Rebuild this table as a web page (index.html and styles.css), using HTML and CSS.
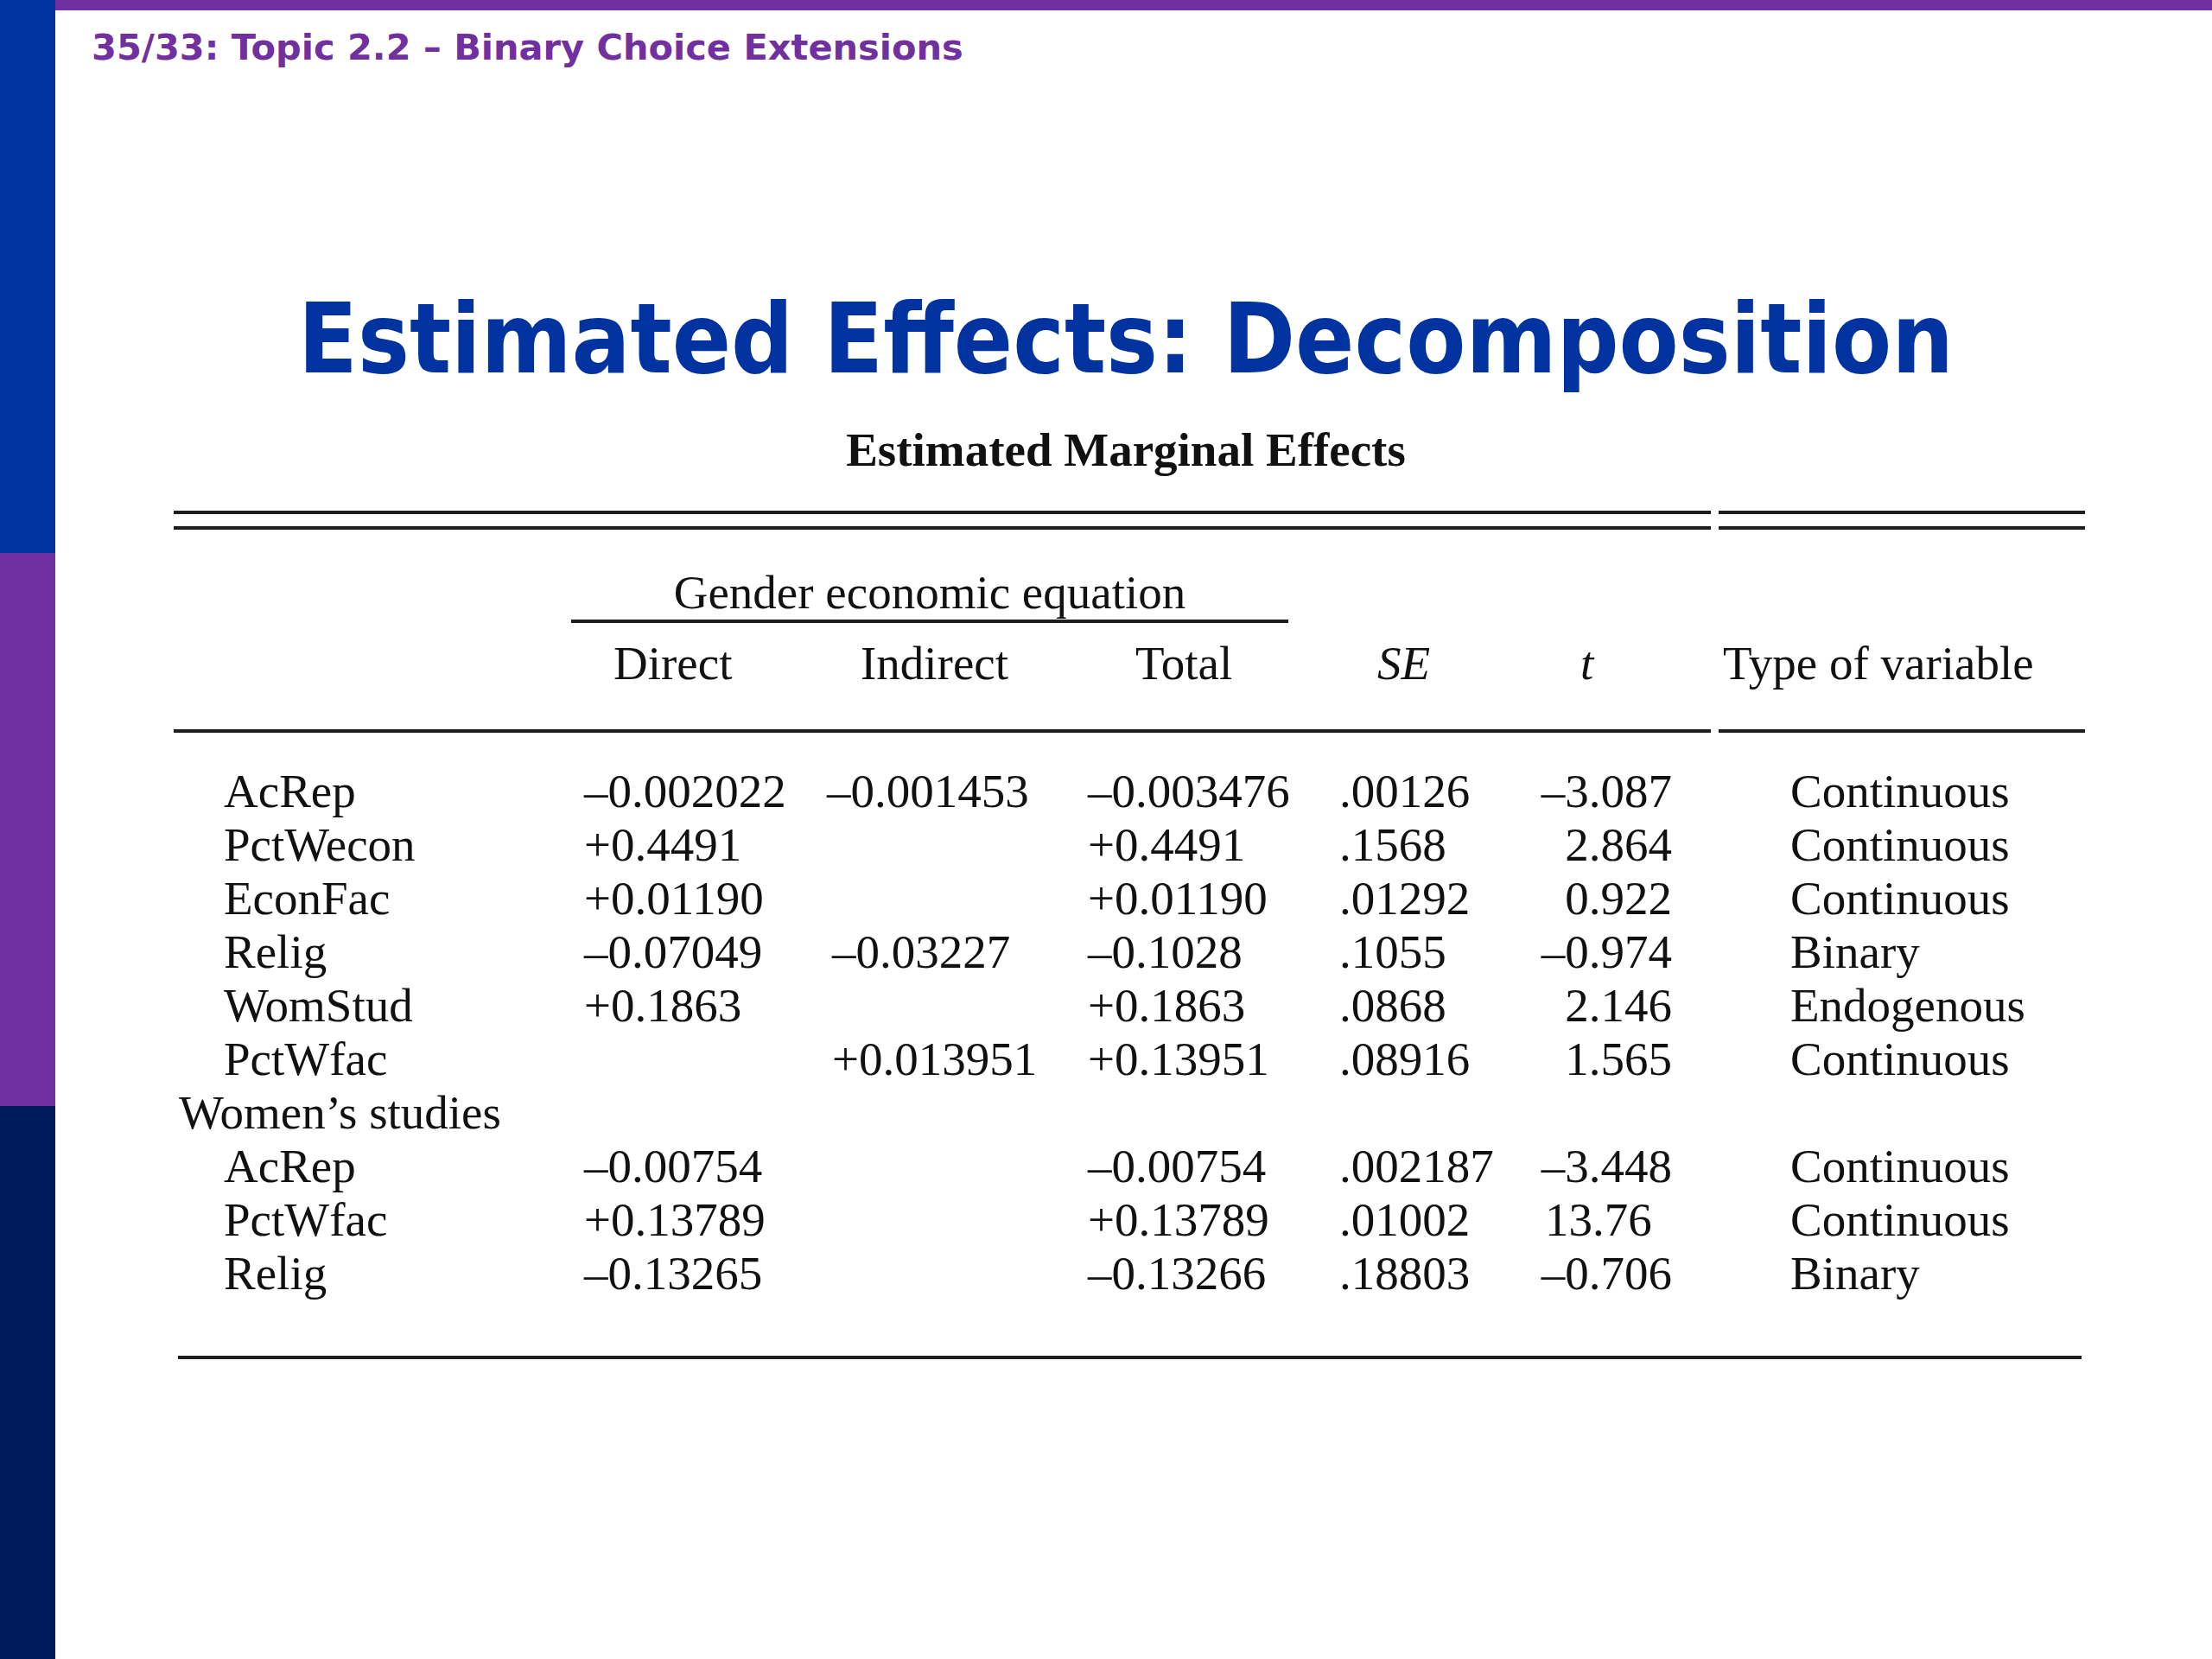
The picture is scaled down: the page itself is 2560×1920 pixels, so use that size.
FILE: index.html
```html
<!DOCTYPE html>
<html lang="en">
<head>
<meta charset="utf-8">
<title>Estimated Effects: Decomposition</title>
<link rel="stylesheet" href="styles.css">
</head>
<body>
<div class="side">
  <div class="side-a"></div>
  <div class="side-b"></div>
  <div class="side-c"></div>
</div>
<div class="main">
  <div class="topbar"></div>
  <div class="crumb">35/33: Topic 2.2 – Binary Choice Extensions</div>
  <h1 class="title">Estimated Effects: Decomposition</h1>
  <div class="subtitle">Estimated Marginal Effects</div>

  <div class="tbl">
    <div class="dbl span-main"></div><div class="dbl span-type"></div>

    <div class="sp42 span-all"></div>
    <div class="geq">Gender economic equation</div>

    <div class="sp16 span-all"></div>
    <div class="c"></div>
    <div class="c hd-direct">Direct</div>
    <div class="c hd-indirect">Indirect</div>
    <div class="c hd-total">Total</div>
    <div class="c hd-se"><i>SE</i></div>
    <div class="c hd-t"><i>t</i></div>
    <div class="c"></div>
    <div class="c hd-type">Type of variable</div>

    <div class="sp45 span-all"></div>
    <div class="rule span-main"></div><div class="rule span-type"></div>

    <div class="sp37 span-all"></div>

    <div class="c lbl">AcRep</div><div class="c dir">–0.002022</div><div class="c ind ind-a">–0.001453</div><div class="c tot">–0.003476</div><div class="c se">.00126</div><div class="c tv">–3.087</div><div class="c"></div><div class="c ty">Continuous</div>

    <div class="c lbl">PctWecon</div><div class="c dir">+0.4491</div><div class="c ind"></div><div class="c tot">+0.4491</div><div class="c se">.1568</div><div class="c tv">2.864</div><div class="c"></div><div class="c ty">Continuous</div>

    <div class="c lbl">EconFac</div><div class="c dir">+0.01190</div><div class="c ind"></div><div class="c tot">+0.01190</div><div class="c se">.01292</div><div class="c tv">0.922</div><div class="c"></div><div class="c ty">Continuous</div>

    <div class="c lbl">Relig</div><div class="c dir">–0.07049</div><div class="c ind">–0.03227</div><div class="c tot">–0.1028</div><div class="c se">.1055</div><div class="c tv">–0.974</div><div class="c"></div><div class="c ty">Binary</div>

    <div class="c lbl">WomStud</div><div class="c dir">+0.1863</div><div class="c ind"></div><div class="c tot">+0.1863</div><div class="c se">.0868</div><div class="c tv">2.146</div><div class="c"></div><div class="c ty">Endogenous</div>

    <div class="c lbl">PctWfac</div><div class="c dir"></div><div class="c ind">+0.013951</div><div class="c tot">+0.13951</div><div class="c se">.08916</div><div class="c tv">1.565</div><div class="c"></div><div class="c ty">Continuous</div>

    <div class="c group span-all">Women’s studies</div>

    <div class="c lbl">AcRep</div><div class="c dir">–0.00754</div><div class="c ind"></div><div class="c tot">–0.00754</div><div class="c se">.002187</div><div class="c tv">–3.448</div><div class="c"></div><div class="c ty">Continuous</div>

    <div class="c lbl">PctWfac</div><div class="c dir">+0.13789</div><div class="c ind"></div><div class="c tot">+0.13789</div><div class="c se">.01002</div><div class="c tv tv-left">13.76</div><div class="c"></div><div class="c ty">Continuous</div>

    <div class="c lbl">Relig</div><div class="c dir">–0.13265</div><div class="c ind"></div><div class="c tot">–0.13266</div><div class="c se">.18803</div><div class="c tv">–0.706</div><div class="c"></div><div class="c ty">Binary</div>

    <div class="sp64 span-all"></div>
    <div class="rule bottom span-all"></div>
  </div>
</div>
</body>
</html>
```

FILE: styles.css
```css
html, body {
  margin: 0;
  padding: 0;
}

body {
  width: 2560px;
  height: 1920px;
  display: flex;
  background: #ffffff;
  overflow: hidden;
}

.side {
  flex: none;
  width: 64px;
  display: flex;
  flex-direction: column;
}

.side-a {
  height: 640px;
  background: #0033a0;
}

.side-b {
  height: 640px;
  background: #7030a0;
}

.side-c {
  flex: 1;
  background: #001b5c;
}

.main {
  flex: 1;
  display: flex;
  flex-direction: column;
}

.topbar {
  height: 12px;
  background: #7030a0;
}

.crumb {
  margin: 18px 0 0 42px;
  font-family: "DejaVu Sans", sans-serif;
  font-weight: bold;
  font-size: 41.5px;
  line-height: 50px;
  color: #7030a0;
  white-space: nowrap;
}

.title {
  margin: 247px 0 0 0;
  padding-right: 18px;
  font-family: "DejaVu Sans Condensed", "DejaVu Sans", sans-serif;
  font-stretch: condensed;
  font-weight: bold;
  font-size: 112px;
  line-height: 130px;
  color: #0033a0;
  text-align: center;
  white-space: nowrap;
}

.subtitle {
  margin-top: 33px;
  padding-right: 18px;
  font-family: "Liberation Serif", serif;
  font-weight: bold;
  font-size: 55px;
  line-height: 62px;
  color: #111111;
  text-align: center;
}

.tbl {
  margin: 39px 0 0 137px;
  width: 2212px;
  display: grid;
  grid-template-columns: 475px 281px 300px 293px 230px 200px 9px 424px;
  font-family: "Liberation Serif", serif;
  font-size: 55px;
  line-height: 62px;
  color: #111111;
}

.span-all { grid-column: 1 / -1; }
.span-main { grid-column: 1 / 7; }
.span-type { grid-column: 8 / 9; }

.dbl {
  height: 14px;
  border-top: 4px solid #1e1e1e;
  border-bottom: 4px solid #1e1e1e;
}

.rule {
  height: 0;
  border-top: 4px solid #1e1e1e;
}

.rule.bottom {
  margin: 0 4px 0 5px;
}

.sp16 { height: 16px; }
.sp37 { height: 37px; }
.sp42 { height: 42px; }
.sp45 { height: 45px; }
.sp64 { height: 64px; }

.geq {
  grid-column: 2 / 5;
  margin: 0 59px 0 -15px;
  border-bottom: 4px solid #1e1e1e;
  text-align: center;
  white-space: nowrap;
}

.c {
  white-space: nowrap;
  min-height: 62px;
}

.hd-direct { padding-left: 34px; }
.hd-indirect { padding-left: 39px; }
.hd-total { padding-left: 57px; }
.hd-se { padding-left: 44px; }
.hd-t { padding-left: 49px; }
.hd-type { padding-left: 5px; }

.lbl { padding-left: 58px; }
.dir { padding-left: 0; }
.ind { padding-left: 6px; }
.ind-a { padding-left: 0; }
.tot { padding-left: 2px; }
.se { padding-left: 0; }
.tv {
  text-align: right;
  padding-right: 45px;
}
.tv-left {
  text-align: left;
  padding: 0 0 0 8px;
}
.ty { padding-left: 83px; }

.group {
  padding-left: 6px;
}
```
